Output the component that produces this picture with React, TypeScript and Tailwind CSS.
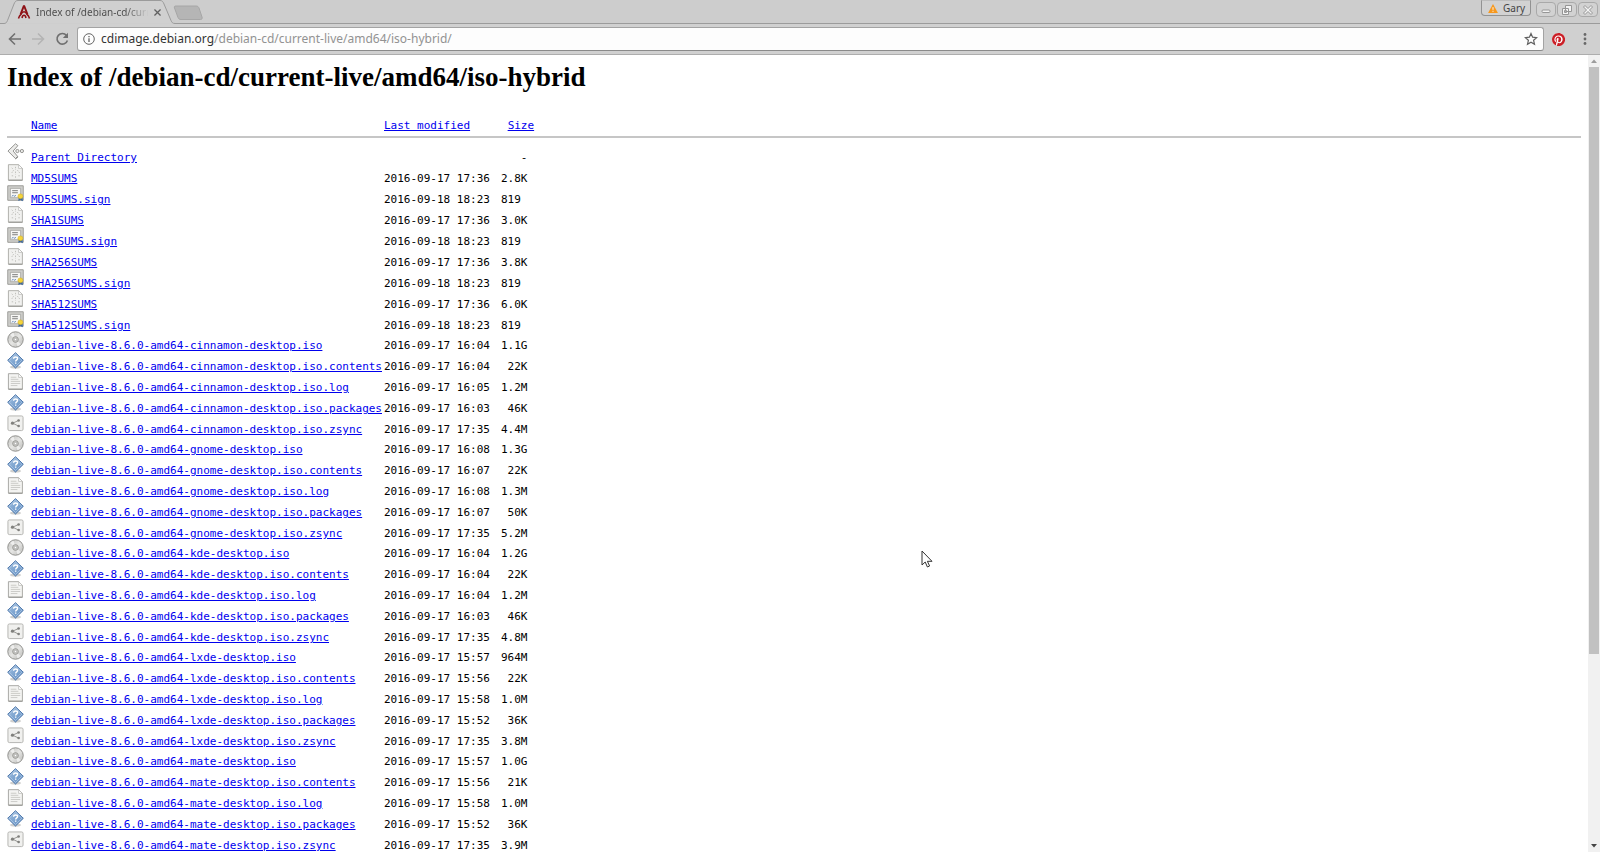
import type { ReactNode } from "react";

type Kind = "back" | "sum" | "sign" | "disc" | "help" | "log" | "share";

type Entry = {
  kind: Kind;
  name: string;
  date: string;
  size: string;
};

const sums: Entry[] = [
  { kind: "back", name: "Parent Directory", date: "", size: "   -" },
  { kind: "sum", name: "MD5SUMS", date: "2016-09-17 17:36", size: "2.8K" },
  { kind: "sign", name: "MD5SUMS.sign", date: "2016-09-18 18:23", size: "819 " },
  { kind: "sum", name: "SHA1SUMS", date: "2016-09-17 17:36", size: "3.0K" },
  { kind: "sign", name: "SHA1SUMS.sign", date: "2016-09-18 18:23", size: "819 " },
  { kind: "sum", name: "SHA256SUMS", date: "2016-09-17 17:36", size: "3.8K" },
  { kind: "sign", name: "SHA256SUMS.sign", date: "2016-09-18 18:23", size: "819 " },
  { kind: "sum", name: "SHA512SUMS", date: "2016-09-17 17:36", size: "6.0K" },
  { kind: "sign", name: "SHA512SUMS.sign", date: "2016-09-18 18:23", size: "819 " },
];

const fileTypes: { kind: Kind; suffix: string }[] = [
  { kind: "disc", suffix: ".iso" },
  { kind: "help", suffix: ".iso.contents" },
  { kind: "log", suffix: ".iso.log" },
  { kind: "help", suffix: ".iso.packages" },
  { kind: "share", suffix: ".iso.zsync" },
];

const desktops: { name: string; files: [string, string][] }[] = [
  { name: "cinnamon", files: [["16:04", "1.1G"], ["16:04", " 22K"], ["16:05", "1.2M"], ["16:03", " 46K"], ["17:35", "4.4M"]] },
  { name: "gnome", files: [["16:08", "1.3G"], ["16:07", " 22K"], ["16:08", "1.3M"], ["16:07", " 50K"], ["17:35", "5.2M"]] },
  { name: "kde", files: [["16:04", "1.2G"], ["16:04", " 22K"], ["16:04", "1.2M"], ["16:03", " 46K"], ["17:35", "4.8M"]] },
  { name: "lxde", files: [["15:57", "964M"], ["15:56", " 22K"], ["15:58", "1.0M"], ["15:52", " 36K"], ["17:35", "3.8M"]] },
  { name: "mate", files: [["15:57", "1.0G"], ["15:56", " 21K"], ["15:58", "1.0M"], ["15:52", " 36K"], ["17:35", "3.9M"]] },
];

const entries: Entry[] = [
  ...sums,
  ...desktops.flatMap((d) =>
    d.files.map(([time, size], i) => ({
      kind: fileTypes[i].kind,
      name: `debian-live-8.6.0-amd64-${d.name}-desktop${fileTypes[i].suffix}`,
      date: `2016-09-17 ${time}`,
      size,
    })),
  ),
];

const drawings: Record<Kind, ReactNode> = {
  back: (
    <g fill="#ececea" stroke="#8f8f8c">
      <path d="M9 .8 1 8.500 9 16.500l2.500-2L6.500 8.500l5-5.700z" strokeLinejoin="round" />
      <path d="M9 16.700l2.500-2" stroke="#6f6f6c" />
      <circle cx="11" cy="8.500" r="1.700" />
      <circle cx="15.800" cy="8.500" r="1.700" />
    </g>
  ),
  sum: (
    <g>
      <path d="M1.500.7h10.800l4 4V17H1.500z" fill="#f1f1ef" stroke="#adada9" />
      <path d="M12.300.7v4h4z" fill="#fff" stroke="#b4b4b0" strokeWidth="0.700" />
      <path d="M9 3v3M7 6.500 5 9.500M11 6.500l2.500 3M9 8v3M5 12.500h2M9 13v2.500M12 12.500h2M5 4l1.500 1.500" stroke="#bdbdb9" strokeDasharray="1.500 1" />
      <path d="M1.500 17.300h15" stroke="#858581" strokeWidth="0.800" />
    </g>
  ),
  sign: (
    <g>
      <path d="M.8.8h16.400v15.400H.8z" fill="#cfcfcc" stroke="#999995" />
      <path d="M3.500 3.500h11v10h-11z" fill="#f7f7f5" stroke="#a9a9a5" />
      <path d="M5.500 6h6M5.500 8.200h6" stroke="#777" />
      <path d="M5 12l1.500-1 1 1 2-1" stroke="#6687b5" fill="none" />
      <path d="M12.500 13l-.5 4 2.200-1.200 2.600 1.400-.3-4.200z" fill="#3d699f" />
      <circle cx="14.200" cy="12" r="2.600" fill="#f4d43b" stroke="#d3ad25" strokeWidth="0.600" />
    </g>
  ),
  disc: (
    <g>
      <circle cx="9" cy="9" r="8.200" fill="url(#disc)" stroke="#858582" strokeWidth="0.900" />
      <path d="M9 9 3.200 4.200A7.600 7.600 0 0 1 7 1.800zM9 9l5.800 4.800a7.600 7.600 0 0 1-3.800 2.400z" fill="#fff" opacity="0.600" />
      <circle cx="9" cy="9" r="3" fill="#d0d0cd" stroke="#8c8c89" strokeWidth="0.900" />
      <circle cx="9" cy="9" r="1.300" fill="#fff" stroke="#7d7d7a" strokeWidth="0.500" />
    </g>
  ),
  help: (
    <g>
      <ellipse cx="9" cy="16" rx="6" ry="1.700" fill="#d0d0ce" />
      <path d="M9 .7 17.300 8.800 9 17 .7 8.800z" fill="url(#help)" stroke="#4a74a8" strokeWidth="1" strokeLinejoin="round" />
      <path d="M9 2.200 15.700 8.800 9 15.400 2.300 8.800z" fill="none" stroke="#bcd3ec" strokeWidth="0.700" />
      <path d="M7 7.200C7 5.900 7.900 5.300 9.100 5.300s2.100.7 2.100 1.700c0 1.300-2 1.400-2 3M9.200 11v1.500" fill="none" stroke="#fff" strokeWidth="1.500" />
    </g>
  ),
  log: (
    <g>
      <path d="M1.500.7h10.800l4 4V17H1.500z" fill="#f4f4f2" stroke="#a6a6a2" />
      <path d="M12.300.7v4h4z" fill="#fff" stroke="#b4b4b0" strokeWidth="0.700" />
      <path d="M4 4.500h6M4 6.700h8M4 8.900h10M4 11.100h10M4 13.300h7" stroke="#c4c4c1" strokeWidth="0.900" />
      <path d="M1.500 17.300h15" stroke="#858581" strokeWidth="0.800" />
    </g>
  ),
  share: (
    <g>
      <rect x="1" y="1" width="16" height="15.500" rx="1.500" fill="#f0f0ee" stroke="#b2b2af" />
      <path d="M12.200 5.800 6 8.700l6.200 3" fill="none" stroke="#90908d" />
      <circle cx="5.800" cy="8.700" r="1.700" fill="#80807d" />
      <circle cx="12.300" cy="5.800" r="1.400" fill="#80807d" />
      <circle cx="12.300" cy="11.600" r="1.400" fill="#80807d" />
    </g>
  ),
};

function FileIcon({ kind }: { kind: Kind }) {
  return (
    <svg viewBox="0 0 18 18" className="block size-[17px]" aria-hidden="true">
      {drawings[kind]}
    </svg>
  );
}

function Gradients() {
  return (
    <svg className="absolute size-0" aria-hidden="true">
      <defs>
        <linearGradient id="help" x1="0" y1="0" x2="1" y2="1">
          <stop offset="0" stopColor="#a3c0e0" />
          <stop offset="1" stopColor="#5c8cc2" />
        </linearGradient>
        <linearGradient id="disc" x1="0" y1="0" x2="1" y2="1">
          <stop offset="0" stopColor="#bdbdba" />
          <stop offset="0.500" stopColor="#e6e6e4" />
          <stop offset="1" stopColor="#b6b6b3" />
        </linearGradient>
      </defs>
    </svg>
  );
}

function WindowButton({ label, children }: { label: string; children: ReactNode }) {
  return (
    <button aria-label={label} className="flex h-[15px] w-5 items-center justify-center rounded-sm border border-[#a9a9a9] bg-[#d2d2d2]">
      <svg viewBox="0 0 12 12" className="size-3" fill="#f4f4f4" stroke="#969696" aria-hidden="true">
        {children}
      </svg>
    </button>
  );
}

function TabStrip() {
  return (
    <div className="flex h-6 bg-[#cdcdcd]">
      <div className="relative flex w-[178px] items-center pl-[17px]">
        <svg viewBox="0 0 178 24" className="absolute inset-0 h-6 w-[178px]" aria-hidden="true">
          <path d="M0 23.500H4c2 0 2.500-1 3.500-3L14 4c1-2.500 2-3.500 4-3.500h142c2 0 3 1 4 3.500l7 16.500c1 2 1.500 3 4 3h3" fill="#d0d0d0" stroke="#9b9b9b" />
        </svg>
        <svg viewBox="0 0 14 14" className="relative size-[14px]" fill="none" stroke="#8e1217" aria-hidden="true">
          <path d="M7 .5 3.500 9.500M7 .5l3.500 9" strokeWidth="2" />
          <path d="M3.800 9.500C5 7.500 6 6.800 7 6.800s2 .7 3.200 2.700M1.500 13.500c.5-2 1.500-3.500 2.500-4M12.500 13.500c-.5-2-1.500-3.500-2.500-4M5 13c.3-1.500 1-2.700 2-2.700s1.700 1.200 2 2.700" strokeWidth="1.500" />
        </svg>
        <span className="relative ml-[5px] w-28 bg-linear-to-r from-[#4a4a4a] from-80% to-[#cdcdcd] bg-clip-text text-[10px] leading-4 whitespace-nowrap text-transparent">
          Index of /debian-cd/curr
        </span>
        <button aria-label="Close tab" className="relative ml-[6px]">
          <svg viewBox="0 0 8 8" className="size-[7px]" stroke="#606060" strokeWidth="1.500" aria-hidden="true">
            <path d="M.5.5l7 7M7.500.5l-7 7" />
          </svg>
        </button>
      </div>
      <div className="flex flex-1 items-start border-b border-[#9b9b9b]">
        <button aria-label="New tab" className="mt-[5px] -ml-[5px]">
          <svg viewBox="0 0 30 16" className="h-4 w-[30px]" aria-hidden="true">
            <path d="M3 1h20c2 0 2.500 1 3 2l3 9c.5 1.500 0 2.500-1.500 2.500H8c-1.500 0-2.500-.5-3-2L1.500 3C1 1.500 1.500 1 3 1z" fill="#b5b5b5" stroke="#a6a6a6" />
          </svg>
        </button>
        <div className="ml-auto flex gap-px pr-[2px]">
          <button className="mr-[4px] flex h-4 w-[50px] items-center gap-[5px] rounded-b-[4px] border border-t-[#bdbdbd] border-[#929292] bg-[#d2d2d2] pl-[6px] text-[10px] leading-3 text-[#444]">
            <svg viewBox="0 0 11 10" className="h-[9px] w-[10px]" aria-hidden="true">
              <path d="M5.500 0 11 10H0z" fill="#f7981d" />
              <path d="M5.500 3.500v3M5.500 7.500v1.200" stroke="#fff" />
            </svg>
            Gary
          </button>
          <div className="flex gap-px pt-[2px]">
            <WindowButton label="Minimize">
              <rect x="2" y="6" width="8" height="2.500" rx="1" />
            </WindowButton>
            <WindowButton label="Restore">
              <path d="M4.500 1.500h6v6h-6zM1.500 4.500h6v6h-6zM3.500 6.500h2v2h-2z" />
            </WindowButton>
            <WindowButton label="Close">
              <path d="M1.500 3 3 1.500l3 3 3-3L10.500 3l-3 3 3 3L9 10.500l-3-3-3 3L1.500 9l3-3z" />
            </WindowButton>
          </div>
        </div>
      </div>
    </div>
  );
}

function Toolbar() {
  return (
    <div className="flex h-[31px] items-center border-b border-[#adadad] bg-[#d0d0d0] pl-[8px]">
      <button aria-label="Back">
        <svg viewBox="0 0 14 14" className="size-[14px]" fill="none" stroke="#707070" strokeWidth="1.600" aria-hidden="true">
          <path d="M13 7H2M7 1.500 1.500 7 7 12.500" />
        </svg>
      </button>
      <button aria-label="Forward" className="ml-[9px]">
        <svg viewBox="0 0 14 14" className="size-[14px]" fill="none" stroke="#b4b4b4" strokeWidth="1.600" aria-hidden="true">
          <path d="M1 7h11M7 1.500 12.500 7 7 12.500" />
        </svg>
      </button>
      <button aria-label="Reload" className="ml-[10px]">
        <svg viewBox="0 0 14 14" className="size-[14px]" fill="none" stroke="#707070" strokeWidth="1.600" aria-hidden="true">
          <path d="M11.500 3.500a5.300 5.300 0 1 0 .9 4.900" />
          <path d="M13 .8V6H7.800z" fill="#707070" stroke="none" />
        </svg>
      </button>
      <div className="ml-[8px] flex h-6 flex-1 items-center rounded-[3px] border border-[#a3a3a3] border-b-[#8a8a8a] bg-[#fdfdfd] pr-[5px] pl-[5px]">
        <svg viewBox="0 0 12 12" className="size-3" fill="none" stroke="#646464" aria-hidden="true">
          <circle cx="6" cy="6" r="5.300" />
          <path d="M6 5.200v3.800M6 2.900v1.300" strokeWidth="1.300" />
        </svg>
        <a href="#" className="ml-[6px] flex-1 text-[12px] leading-5 text-[#929292]">
          <span className="text-[#333]">cdimage.debian.org</span>/debian-cd/current-live/amd64/iso-hybrid/
        </a>
        <button aria-label="Bookmark this page">
          <svg viewBox="0 0 14 14" className="size-[14px]" fill="none" stroke="#606060" strokeWidth="1.200" aria-hidden="true">
            <path d="M7 1.500l1.600 3.700 4 .4-3 2.700.9 4L7 10.200l-3.500 2.100.9-4-3-2.700 4-.4z" />
          </svg>
        </button>
      </div>
      <button aria-label="Pinterest" className="ml-[8px]">
        <svg viewBox="0 0 24 24" className="size-[13px]" aria-hidden="true">
          <circle cx="12" cy="12" r="12" fill="#fff" />
          <path
            fill="#cb1f27"
            d="M12 0C5.400 0 0 5.400 0 12c0 5.100 3.200 9.400 7.600 11.200-.1-.9-.2-2.400 0-3.400.2-.9 1.400-6 1.400-6s-.4-.7-.4-1.800c0-1.700 1-2.900 2.200-2.900 1 0 1.500.8 1.500 1.700 0 1-.7 2.600-1 4-.3 1.200.6 2.200 1.800 2.200 2.100 0 3.800-2.200 3.800-5.500 0-2.900-2.100-4.900-5-4.900-3.400 0-5.400 2.600-5.400 5.200 0 1 .4 2.100.9 2.700.1.100.1.200.1.300l-.3 1.400c0 .2-.2.300-.4.200-1.500-.7-2.400-2.900-2.400-4.600 0-3.800 2.700-7.200 7.900-7.200 4.100 0 7.400 2.900 7.400 6.900 0 4.100-2.600 7.400-6.200 7.400-1.200 0-2.300-.6-2.700-1.400l-.7 2.800c-.3 1-1 2.300-1.500 3.100 1.100.3 2.300.5 3.600.5 6.600 0 12-5.400 12-12S18.600 0 12 0z"
          />
        </svg>
      </button>
      <button aria-label="Menu" className="mr-[13px] ml-[18px]">
        <svg viewBox="0 0 4 14" className="h-[14px] w-1" fill="#686868" aria-hidden="true">
          <circle cx="2" cy="2.500" r="1.400" />
          <circle cx="2" cy="7" r="1.400" />
          <circle cx="2" cy="11.500" r="1.400" />
        </svg>
      </button>
    </div>
  );
}

function Listing() {
  return (
    <main className="min-w-0 flex-1 overflow-hidden bg-white px-[7px] pt-[5px]">
      <h1 className="font-['Liberation_Serif',serif] text-[27px] leading-[34px] font-bold text-black">
        Index of /debian-cd/current-live/amd64/iso-hybrid
      </h1>
      <table className="mt-[26px] w-full table-fixed border-collapse text-left font-['DejaVu_Sans_Mono',monospace] text-[11px] leading-[11px] text-black">
        <colgroup>
          <col className="w-6" />
          <col className="w-[353px]" />
          <col className="w-[117px]" />
          <col />
        </colgroup>
        <thead className="border-b-2 border-[#c6c6c6]">
          <tr className="h-[17px] align-top">
            <td />
            <th className="font-normal">
              <a href="#" className="text-[#0000ee] underline">Name</a>
            </th>
            <th className="font-normal">
              <a href="#" className="text-[#0000ee] underline">Last modified</a>
            </th>
            <th className="font-normal whitespace-pre">
              {" "}
              <a href="#" className="text-[#0000ee] underline">Size</a>
            </th>
          </tr>
        </thead>
        <tbody>
          <tr className="h-[5px]" aria-hidden="true" />
          {entries.map((e) => (
            <tr key={e.name} className={e.kind === "disc" ? "h-5 align-bottom" : "h-[21px] align-bottom"}>
              <td className="p-0 pb-[3px]">
                <FileIcon kind={e.kind} />
              </td>
              <td className="p-0 whitespace-nowrap">
                <a href="#" className="text-[#0000ee] underline">{e.name}</a>
              </td>
              <td className="p-0">{e.date}</td>
              <td className="p-0 whitespace-pre">{e.size}</td>
            </tr>
          ))}
        </tbody>
      </table>
    </main>
  );
}

function Scrollbar() {
  return (
    <div className="flex w-3 flex-col items-center bg-[#f1f1f1]" aria-hidden="true">
      <svg viewBox="0 0 12 12" className="size-3">
        <path d="M3 8l3-3.500L9 8z" fill="#9c9c9c" />
      </svg>
      <div className="w-full flex-1 px-px">
        <div className="h-[76%] bg-[#c1c1c1]" />
      </div>
      <svg viewBox="0 0 12 12" className="size-3">
        <path d="M3 4l3 3.500L9 4z" fill="#454545" />
      </svg>
    </div>
  );
}

export default function App() {
  return (
    <div className="relative flex h-screen flex-col overflow-hidden font-['Noto_Sans',sans-serif]">
      <Gradients />
      <TabStrip />
      <Toolbar />
      <div className="flex min-h-0 flex-1">
        <Listing />
        <Scrollbar />
      </div>
      <svg viewBox="0 0 12 18" className="absolute top-[550px] left-[921px] h-[18px] w-3" aria-hidden="true">
        <path d="M1 1v14l3.200-3 2.200 5 2.200-1-2.200-4.700H11z" fill="#fff" stroke="#333" strokeLinejoin="round" />
      </svg>
    </div>
  );
}
